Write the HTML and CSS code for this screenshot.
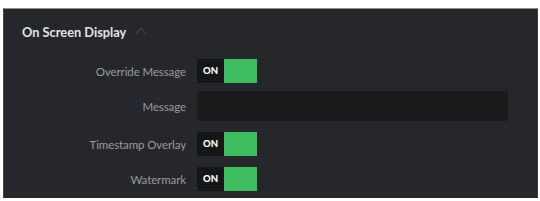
FILE: index.html
```html
<!DOCTYPE html>
<html lang="en">
<head>
  <meta charset="UTF-8" />
  <title>On Screen Display</title>
  <link rel="stylesheet" href="styles.css">
</head>
<body>
  <div class="panel">
    <div class="panel-head">
      <h2>On Screen Display</h2>
      <svg class="chevron" width="12" height="8" viewBox="0 0 12 8">
        <path d="M1 6.5 L6 1.5 L11 6.5" fill="none" stroke="#3b3e44" stroke-width="1.6" />
      </svg>
    </div>

    <div class="row row-first">
      <label>Override Message</label>
      <div class="toggle"><span class="on">ON</span><span class="knob"></span></div>
    </div>

    <div class="row row-input">
      <label>Message</label>
      <input class="text" type="text" />
    </div>

    <div class="row">
      <label>Timestamp Overlay</label>
      <div class="toggle"><span class="on">ON</span><span class="knob"></span></div>
    </div>

    <div class="row">
      <label>Watermark</label>
      <div class="toggle"><span class="on">ON</span><span class="knob"></span></div>
    </div>
  </div>
</body>
</html>
```

FILE: styles.css
```css
body {
  margin: 0;
  padding: 8px 2px 0 3px;
  background-color: #ffffff;
  font-family: Lato, "Open Sans", sans-serif;
}
.panel {
  height: 190px;
  box-sizing: border-box;
  background-color: #25272b;
  border-top: 1px solid #8d8f92;
  border-right: 1px solid #3a3c40;
  border-left: 1px solid #44464a;
}
.panel-head {
  display: flex;
  align-items: center;
  height: 30px;
  padding: 8px 0 0 18px;
}
.panel-head h2 {
  margin: 0;
  font-size: 12.8px;
  font-weight: 700;
  color: #e2e3e4;
}
.chevron {
  margin-left: 9px;
  margin-top: -2px;
}
.row {
  display: flex;
  align-items: center;
  height: 24px;
  margin-top: 11px;
}
.row-first {
  margin-top: 12px;
}
.row-input {
  height: 30px;
  margin-top: 8px;
}
.row label {
  width: 182px;
  margin-right: 11px;
  text-align: right;
  font-size: 11.5px;
  color: #9a9b9d;
  letter-spacing: -0.1px;
}
.toggle {
  display: flex;
  height: 24px;
}
.toggle .on {
  width: 27px;
  background-color: #151618;
  color: #ffffff;
  font-size: 9.5px;
  font-weight: 900;
  line-height: 24px;
  text-align: center;
}
.toggle .knob {
  width: 33px;
  background-color: #3dbd60;
}
.text {
  width: 311px;
  height: 30px;
  box-sizing: border-box;
  border: none;
  background-color: #1b1b1d;
}
```
